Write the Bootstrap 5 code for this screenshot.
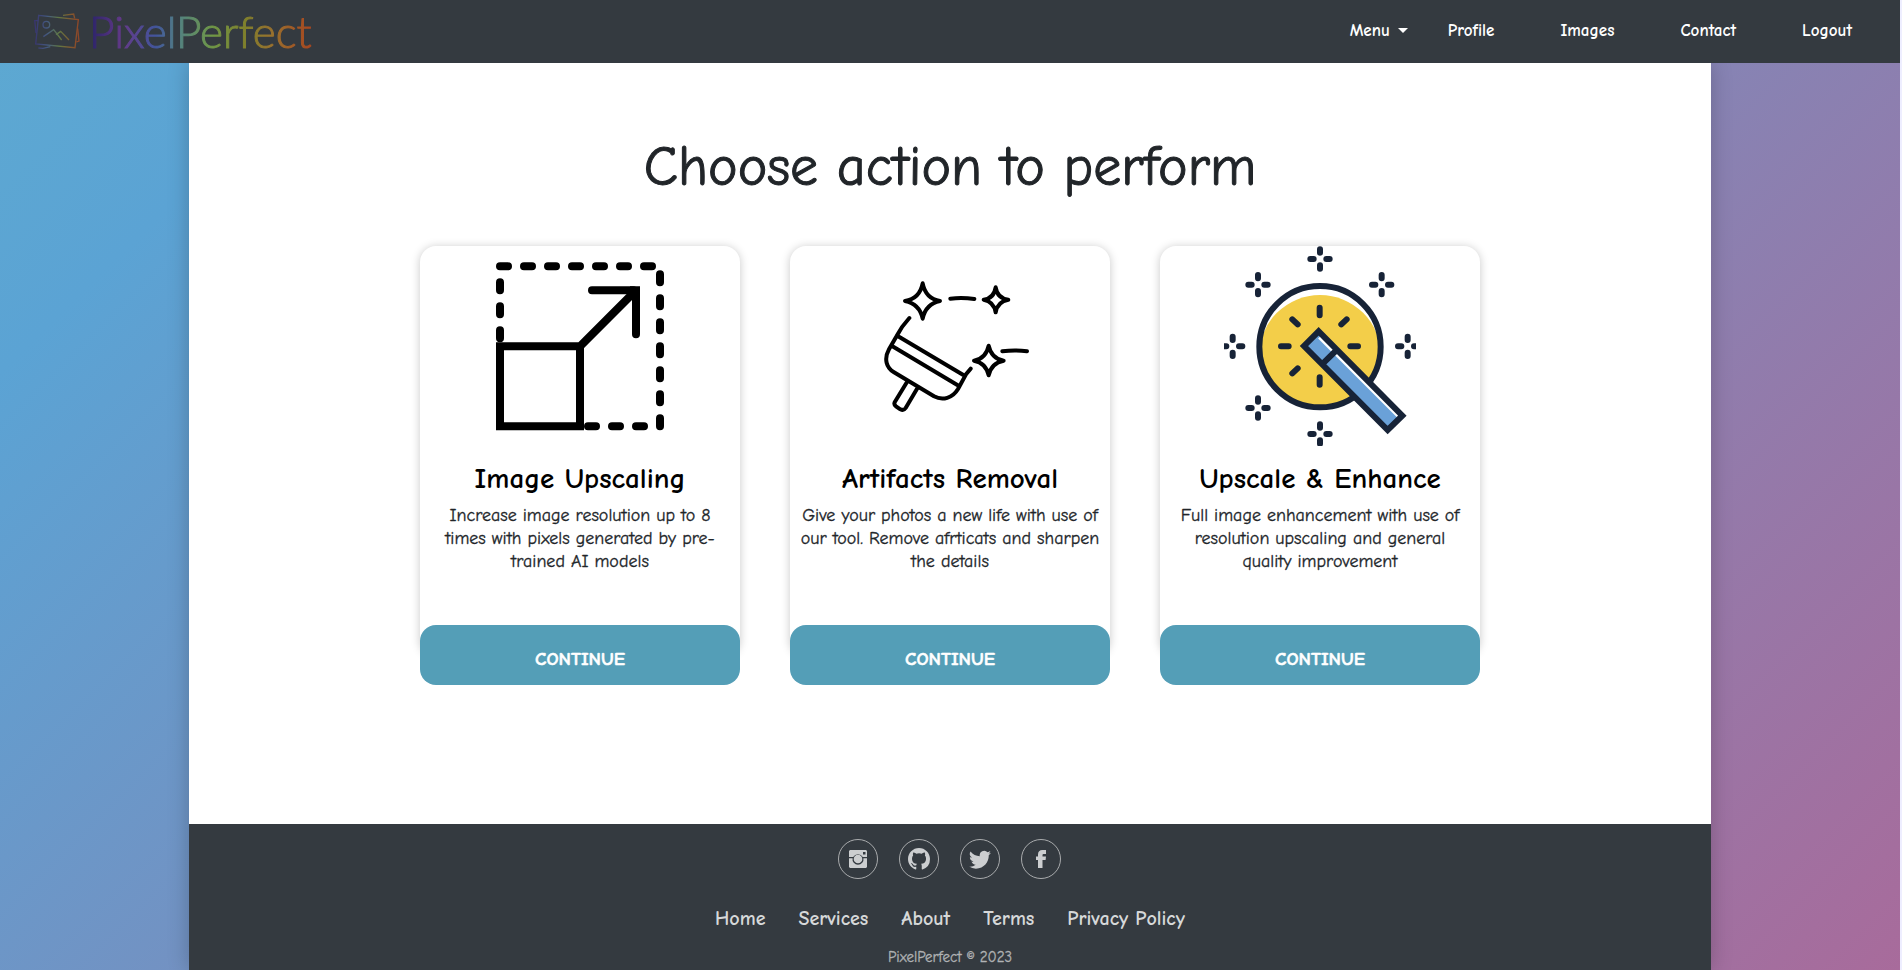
<!DOCTYPE html>
<html lang="en">
<head>
<meta charset="utf-8">
<meta name="viewport" content="width=device-width, initial-scale=1">
<title>PixelPerfect</title>
<link href="https://cdn.jsdelivr.net/npm/bootstrap@5.3.0/dist/css/bootstrap.min.css" rel="stylesheet">
<style>
  body { font-family: "Comic Neue", "Comic Sans MS", "Lato", sans-serif; min-height: 100vh; color: #212529;
    border-right: 2px solid #eef; 
    background: linear-gradient(135deg, #5da9d1 0%, #5ba3d4 13%, #a86b9b 100%) fixed; }
  .site-nav { background: #343a40; min-height: 63px; padding: 0 15px 2px 32px; z-index: 2; }
  .logo-text { font: 300 44px/50px "Lato", sans-serif; opacity: .9; margin-left: 9px; -webkit-text-stroke: 1px transparent;
    background: linear-gradient(90deg, #28206e, #6a3a92 15%, #4459a8 30%, #568a8a 40%, #76a348 55%, #88882a 70%, #a5782c 82%, #b5481c);
    -webkit-background-clip: text; background-clip: text; color: transparent; }
  .site-nav .navbar-nav .nav-link { color: #fff; font-weight: 700; font-size: 17px; line-height: 24px; padding: 0 33px; }
  .site-nav .navbar-nav .menu-link { padding: 0 7px; }
  .site-nav .dropdown-toggle::after { margin-left: 8px; vertical-align: 3px; }
  .panel { width: 80.1%; min-height: calc(100vh - 63px); box-shadow: 0 0 20px rgba(0,0,0,.22); }
  .panel main { padding: 70px 24px 0; }
  .page-title { font-size: 56px; line-height: 68px; font-weight: 400; margin: 0 0 45px; -webkit-text-stroke: 1px; }
  .choices { gap: 50px; padding-bottom: 169px; }
  .choice { width: 320px; height: 409px; border-radius: 16px; box-shadow: 0 1px 10px rgba(0,0,0,.22); }
  .choice h2 { color: #000; font-size: 29px; line-height: 34px; font-weight: 700; margin: 16px 0 8px; }
  .choice p { font-size: 18px; line-height: 23px; padding: 0 8px; margin: 0; -webkit-text-stroke: .3px; }
  .go { height: 60px; margin: auto 0 -30px; border-radius: 16px; background: #549eb7; color: #fff;
    font-weight: 700; font-size: 19px; padding: 8px 0 0; border: 0; -webkit-text-stroke: .5px; }
  .go:hover { background: #478ca4; color: #fff; }
  .site-foot { background: #343a40; padding: 15px 0 3px; color: #d3d4d5; }
  .social { gap: 21px; }
  .social a { width: 40px; height: 40px; border: 1px solid #a9abad; color: #ccced0; }
  .foot-links { gap: 33px; margin: 26px 0 14px; }
  .foot-links a { color: #d6d8d9; font-weight: 700; font-size: 20px; line-height: 28px; }
  .copy { font-size: 15px; line-height: 20px; color: #b0b2b4; -webkit-text-stroke: .3px; }
</style>
</head>
<body>
<nav class="site-nav navbar navbar-expand position-relative">
  <a href="#" class="d-flex align-items-center text-decoration-none" aria-label="PixelPerfect">
    <svg width="48" height="40" viewBox="100 30 144 120" fill="none" stroke="url(#lg)" stroke-width="4" opacity=".75" aria-hidden="true">
      <defs><linearGradient id="lg" gradientUnits="userSpaceOnUse" x1="105" y1="0" x2="243" y2="0"><stop offset="0" stop-color="#39307c"/><stop offset=".3" stop-color="#4a6595"/><stop offset=".55" stop-color="#6f8d46"/><stop offset=".8" stop-color="#9a642a"/><stop offset="1" stop-color="#b0481f"/></linearGradient></defs>
      <path d="M120 43 239 56 229 140 111 129Z"/><circle cx="143" cy="71" r="10"/>
      <path d="M134 107 165 86 189 117M172 101 186 91 211 117M193 43 225 39 228 52M118 59H108L112 96M237 83 241 120 233 123M119 141 133 142 155 137"/>
    </svg>
    <span class="logo-text">PixelPerfect</span>
  </a>
  <ul class="navbar-nav ms-auto">
    <li class="nav-item dropdown"><a class="nav-link menu-link dropdown-toggle" href="#" role="button" data-bs-toggle="dropdown">Menu</a></li>
    <li class="nav-item"><a class="nav-link" href="#">Profile</a></li>
    <li class="nav-item"><a class="nav-link" href="#">Images</a></li>
    <li class="nav-item"><a class="nav-link" href="#">Contact</a></li>
    <li class="nav-item"><a class="nav-link" href="#">Logout</a></li>
  </ul>
</nav>

<div class="panel mx-auto bg-white d-flex flex-column">
  <main class="flex-grow-1 text-center">
    <h1 class="page-title">Choose action to perform</h1>
    <div class="choices d-flex flex-wrap justify-content-center">
      <section class="choice bg-white d-flex flex-column">
        <svg class="w-100" height="200" viewBox="30 32 960 600" fill="none" stroke="#000" stroke-width="24" aria-hidden="true">
          <path stroke-linecap="round" d="M270 93h24m48 0h24m48 0h24m48 0h24m48 0h24m48 0h24m48 0h24M270 141v24m0 48v24m0 48v24M750 117v24m0 48v24m0 48v24m0 48v24m0 48v24m0 48v24m0 48v24M534 573h24m48 0h24m48 0h24M546 165H670M678 175V297"/>
          <path d="M270 333H510V573H270ZM510 333 674 169M660 165H678V190"/>
        </svg>
        <h2>Image Upscaling</h2>
        <p>Increase image resolution up to 8 times with pixels generated by pre-trained AI models</p>
        <button type="button" class="btn go">CONTINUE</button>
      </section>
      <section class="choice bg-white d-flex flex-column">
        <svg class="w-100" height="200" viewBox="30 32 960 600" fill="none" stroke="#000" stroke-width="12" stroke-linecap="round" stroke-linejoin="round" aria-hidden="true">
          <path d="M428 144Q437 190 480 197Q437 206 428 250Q419 206 375 197Q419 190 428 144ZM647 156Q652 189 685 193Q652 199 647 231Q642 199 611 193Q642 189 647 156ZM626 331Q634 370 671 376Q634 383 626 420Q618 383 582 376Q618 370 626 331Z"/>
          <path d="M511 190Q547 186 583 191M667 348Q705 343 741 348M388 248Q365 273 350 302L327 342C311 371 319 397 342 411L462 483C488 497 518 488 534 461L558 417 572 400M353 302 550 419M336 332 532 449M381 440 344 501Q341 508 348 513L361 522Q371 527 377 518L412 459"/>
        </svg>
        <h2>Artifacts Removal</h2>
        <p>Give your photos a new life with use of our tool. Remove afrticats and sharpen the details</p>
        <button type="button" class="btn go">CONTINUE</button>
      </section>
      <section class="choice bg-white d-flex flex-column">
        <svg class="mx-auto" width="192" height="200" viewBox="222 32 576 600" fill="none" stroke="#172337" stroke-width="18" aria-hidden="true">
          <defs><g id="spark" stroke-linecap="round"><path d="M0-29v10M0 19v10M-29 0h10M19 0h10"/></g>
          <clipPath id="disc"><circle cx="510" cy="334" r="182"/></clipPath></defs>
          <circle cx="510" cy="362" r="183" fill="#f3ce49" stroke="none" clip-path="url(#disc)"/>
          <circle cx="510" cy="334" r="182"/>
          <path stroke-linecap="round" d="M509 217v23M509 426v22M393 333h23M601 333h23M427 252l16 15M590 252l-16 15M427 414l16-15"/>
          <path d="M506 288 757 541 713 584 462 332Z" fill="#6aa1d8" stroke="none"/>
          <path d="M509 305 746 542" stroke="#fff" stroke-width="13"/>
          <path d="M506 288 757 541 713 584 462 332ZM519 384 560 344"/>
          <use href="#spark" x="510" y="71"/><use href="#spark" x="324" y="148"/><use href="#spark" x="695" y="148"/>
          <use href="#spark" x="248" y="333"/><use href="#spark" x="773" y="333"/><use href="#spark" x="324" y="518"/><use href="#spark" x="510" y="596"/>
        </svg>
        <h2>Upscale &amp; Enhance</h2>
        <p>Full image enhancement with use of resolution upscaling and general quality improvement</p>
        <button type="button" class="btn go">CONTINUE</button>
      </section>
    </div>
  </main>
  <footer class="site-foot text-center">
    <div class="social d-flex justify-content-center">
      <a href="#" aria-label="Instagram" class="rounded-circle d-flex align-items-center justify-content-center">
        <svg width="20" height="20" viewBox="0 0 20 20" fill="currentColor"><path fill-rule="evenodd" d="M2 1h16l1 1v6h-4.200a5.500 5.500 0 0 0-9.600 0H1V2zM15 3v2.500h2.500V3z"/><path d="M1 9.200h3.600a5.500 5.500 0 1 0 10.800 0H19V18l-1 1H2l-1-1z"/><circle cx="10" cy="10" r="4.300"/></svg></a>
      <a href="#" aria-label="GitHub" class="rounded-circle d-flex align-items-center justify-content-center">
        <svg width="22" height="22" viewBox="0 0 16 16" fill="currentColor"><path d="M8 0C3.580 0 0 3.580 0 8c0 3.540 2.290 6.530 5.470 7.590.4.070.55-.17.55-.38 0-.19-.01-.82-.01-1.490-2.010.37-2.530-.49-2.690-.94-.09-.23-.48-.94-.82-1.130-.28-.15-.68-.52-.01-.53.63-.01 1.080.58 1.230.82.72 1.210 1.870.87 2.330.66.070-.52.28-.87.51-1.070-1.780-.2-3.640-.89-3.640-3.950 0-.87.31-1.590.82-2.150-.08-.2-.36-1.020.08-2.120 0 0 .67-.21 2.200.82a7.600 7.600 0 0 1 4 0c1.530-1.040 2.200-.82 2.200-.82.44 1.100.16 1.920.08 2.120.51.56.82 1.270.82 2.150 0 3.070-1.870 3.750-3.650 3.950.29.25.54.73.54 1.480 0 1.070-.01 1.930-.01 2.200 0 .21.150.46.55.38A8 8 0 0 0 16 8c0-4.420-3.580-8-8-8z"/></svg></a>
      <a href="#" aria-label="Twitter" class="rounded-circle d-flex align-items-center justify-content-center">
        <svg width="22" height="22" viewBox="0 0 16 16" fill="currentColor"><path d="M5.026 15c6.038 0 9.341-5.003 9.341-9.334 0-.14 0-.282-.006-.422A6.685 6.685 0 0 0 16 3.542a6.658 6.658 0 0 1-1.889.518 3.301 3.301 0 0 0 1.447-1.817 6.533 6.533 0 0 1-2.087.793A3.286 3.286 0 0 0 7.875 6.030a9.325 9.325 0 0 1-6.767-3.429 3.289 3.289 0 0 0 1.018 4.382A3.323 3.323 0 0 1 .64 6.575v.045a3.288 3.288 0 0 0 2.632 3.218 3.203 3.203 0 0 1-.865.115 3.230 3.230 0 0 1-.614-.057 3.283 3.283 0 0 0 3.067 2.277A6.588 6.588 0 0 1 .78 13.580a6.320 6.320 0 0 1-.78-.045A9.344 9.344 0 0 0 5.026 15z"/></svg></a>
      <a href="#" aria-label="Facebook" class="rounded-circle d-flex align-items-center justify-content-center">
        <svg width="12" height="20" viewBox="0 0 12 20" fill="currentColor"><path d="M11 1v4H8.500Q7.500 5 7.500 6v1.500H11L10.600 11H7.500v8H3v-8H1V7.500h2V5.500Q3 1 7.500 1z"/></svg></a>
    </div>
    <div class="foot-links d-flex justify-content-center">
      <a class="text-decoration-none" href="#">Home</a><a class="text-decoration-none" href="#">Services</a><a class="text-decoration-none" href="#">About</a><a class="text-decoration-none" href="#">Terms</a><a class="text-decoration-none" href="#">Privacy Policy</a>
    </div>
    <div class="copy">PixelPerfect © 2023</div>
  </footer>
</div>
<script src="https://cdn.jsdelivr.net/npm/bootstrap@5.3.0/dist/js/bootstrap.bundle.min.js"></script>
</body>
</html>
